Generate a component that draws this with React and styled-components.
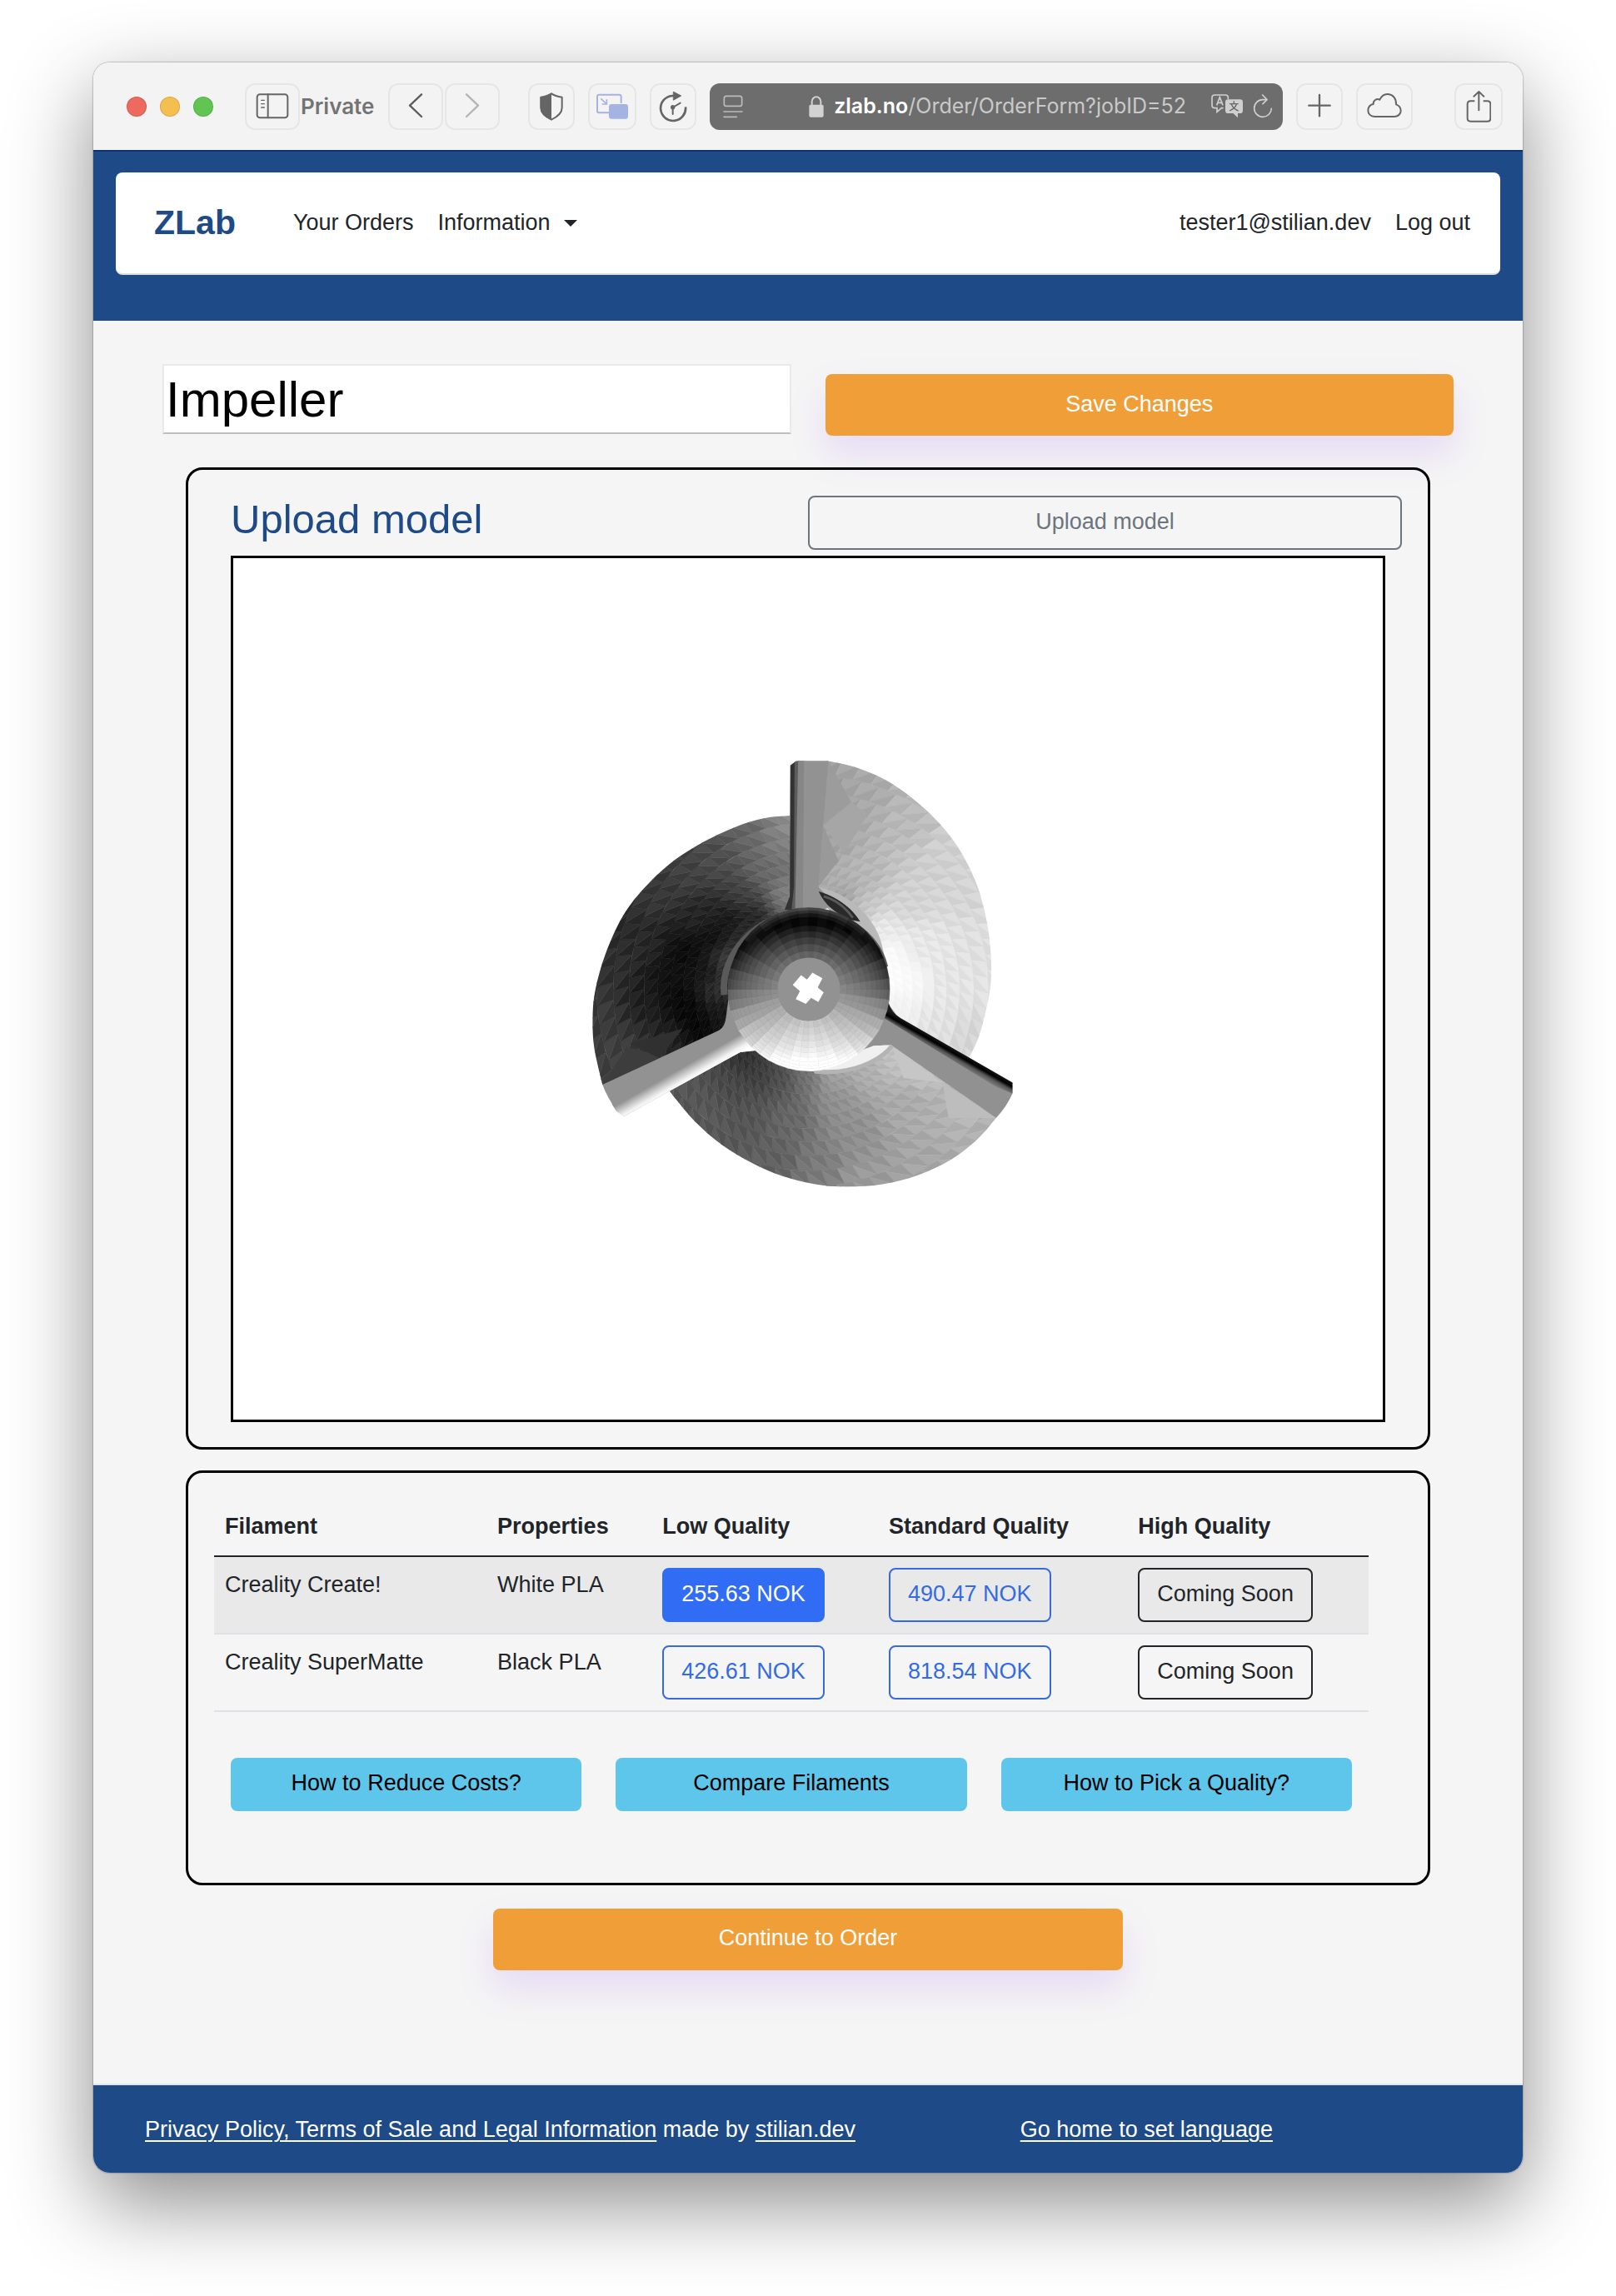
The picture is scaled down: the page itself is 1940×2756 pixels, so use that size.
import React from "react";
import styled, { createGlobalStyle } from "styled-components";

const GlobalStyle = createGlobalStyle`
  *, *::before, *::after { box-sizing: border-box; }
  body {
    margin: 0;
    background: #fff;
    color: #212529;
    font-family: "Liberation Sans", Arial, sans-serif;
    font-size: 27px;
    line-height: 41px;
  }
  button, input { font: inherit; }
  a { color: inherit; }
`;

const Desktop = styled.div`
  padding: 75px 112px 148px;
`;

const Window = styled.div`
  display: flex;
  flex-direction: column;
  overflow: hidden;
  border-radius: 20px;
  background: #f5f5f5;
`;

const WindowShadow = styled.div`
  border-radius: 20px;
  box-shadow: 0 0 2px rgba(0, 0, 0, 0.6), 0 36px 100px rgba(0, 0, 0, 0.46);
`;

/* Browser toolbar */

const Toolbar = styled.div`
  display: flex;
  align-items: center;
  height: 105px;
  padding: 0 24px 0 40px;
  background: #f3f3f3;
  font-family: Inter, sans-serif;
  font-size: 26px;
`;

const Lights = styled.div`
  display: flex;
  gap: 16px;
  margin-right: 38px;
`;

const Light = styled.span`
  width: 24px;
  height: 24px;
  border-radius: 50%;
  border: 1px solid rgba(0, 0, 0, 0.12);
  background: ${(p) => p.$color};
`;

const Group = styled.div`
  display: flex;
  align-items: center;
  gap: ${(p) => p.$gap}px;
  margin-right: ${(p) => p.$after}px;
`;

const ToolButton = styled.button`
  display: flex;
  align-items: center;
  justify-content: center;
  width: ${(p) => p.$width}px;
  height: 56px;
  padding: 0;
  border: 2px solid #e6e6e6;
  border-radius: 12px;
  background: transparent;
  color: #656565;
`;

const PrivateLabel = styled.span`
  width: 106px;
  padding-left: 1px;
  color: #737373;
  font-weight: 600;
`;

const AddressBar = styled.div`
  display: flex;
  flex: 1;
  align-items: center;
  justify-content: space-between;
  height: 56px;
  margin-right: 16px;
  padding: 0 12px 0 16px;
  border-radius: 12px;
  background: #6d6d6d;
`;

const Address = styled.button`
  display: flex;
  align-items: center;
  gap: 12px;
  flex: 1;
  justify-content: flex-end;
  margin-right: 30px;
  padding: 0;
  border: 0;
  background: transparent;
  color: #c9c9c9;
  font-size: 25px;
  white-space: nowrap;
`;

const Host = styled.span`
  color: #fff;
  font-weight: 600;
`;

const BarButton = styled.button`
  display: flex;
  padding: 0;
  border: 0;
  background: transparent;
`;

/* Site header */

const SiteHeader = styled.header`
  padding: 27px 27px 55px;
  background: #1e4a87;
  box-shadow: inset 0 2px 0 #12336a;
`;

const Navbar = styled.nav`
  display: flex;
  align-items: center;
  gap: 29px;
  height: 123px;
  padding: 0 36px 0 46px;
  border-bottom: 2px solid #dcdee1;
  border-radius: 8px;
  background: #fff;
`;

const Brand = styled.a`
  margin-right: 40px;
  color: #1e4a87;
  font-size: 41px;
  font-weight: 700;
  text-decoration: none;
`;

const NavLink = styled.a`
  display: flex;
  align-items: center;
  gap: 16px;
  margin-left: ${(p) => (p.$push ? "auto" : "0")};
  text-decoration: none;
`;

const Caret = styled.span`
  border: 8px solid transparent;
  border-top-color: #212529;
  border-bottom: 0;
`;

/* Page body */

const Main = styled.main`
  display: flex;
  flex-direction: column;
  padding: 52px 0 136px;
`;

const TitleRow = styled.div`
  display: grid;
  grid-template-columns: 1fr 1fr;
  gap: 41px;
  align-items: end;
  margin: 0 83px 38px;
`;

const TitleInput = styled.input`
  width: 100%;
  height: 84px;
  margin-bottom: 2px;
  padding: 0 2px;
  border: 2px solid #e9e9e9;
  border-bottom-color: #bfbfbf;
  border-radius: 0;
  background: #fff;
  color: #000;
  font-size: 60px;
`;

const ActionButton = styled.button`
  width: ${(p) => p.$width || "100%"};
  align-self: ${(p) => (p.$center ? "center" : "end")};
  height: 74px;
  padding: 0 0 2px;
  border: 0;
  border-radius: 8px;
  background: #f09e38;
  box-shadow: 0 22px 44px rgba(145, 65, 250, 0.15);
  color: #fff;
`;

const Card = styled.section`
  margin: 0 111px ${(p) => p.$after}px;
  padding: ${(p) => p.$padding};
  border: 3px solid #000;
  border-radius: 20px;
`;

const ModelHeader = styled.div`
  display: grid;
  grid-template-columns: 1fr 1fr;
  align-items: center;
  margin: 0 -20px 7px;
`;

const ModelTitle = styled.h2`
  margin: 0;
  padding: 0 0 8px 20px;
  color: #1e4a87;
  font-size: 49px;
  font-weight: 400;
  line-height: 57px;
`;

const tones = {
  secondary: "#6c757d",
  primary: "#346be2",
  dark: "#212529",
};

const OutlineButton = styled.button`
  height: 65px;
  padding: 0 21px 2px;
  border: 2px solid ${(p) => (p.$active ? "#316cf4" : tones[p.$tone])};
  border-radius: 8px;
  background: ${(p) => (p.$active ? "#316cf4" : "transparent")};
  color: ${(p) => (p.$active ? "#fff" : tones[p.$tone])};
  white-space: nowrap;
`;

const Viewer = styled.div`
  aspect-ratio: 4 / 3;
  border: 3px solid #000;
  background: #fff;

  svg { display: block; width: 100%; height: 100%; }
`;

const Table = styled.table`
  width: 100%;
  border-collapse: separate;
  border-spacing: 0;
  table-layout: fixed;
`;

const Th = styled.th`
  width: ${(p) => p.$width};
  padding: 14px 13px;
  border-bottom: 2px solid #212529;
  text-align: left;
  white-space: nowrap;
`;

const Row = styled.tr`
  background: ${(p) => (p.$striped ? "#e9e9e9" : "transparent")};
`;

const Td = styled.td`
  padding: 13px;
  border-bottom: 2px solid #dee2e6;
  vertical-align: top;
  white-space: nowrap;

  button { display: block; }
`;

const HelpRow = styled.div`
  display: grid;
  grid-template-columns: repeat(3, 1fr);
  gap: 41px;
  margin: 55px 20px 0;
`;

const HelpButton = styled.button`
  height: 64px;
  padding: 0 0 2px;
  border: 0;
  border-radius: 8px;
  background: #5ec6ea;
  color: #000;
`;

const Footer = styled.footer`
  display: grid;
  grid-template-columns: 66% 34%;
  padding: 33px 62px 31px;
  border-top: 2px solid #dce4ef;
  background: #1e4a87;
  color: #fff;

  a { text-underline-offset: 4px; text-decoration-thickness: 2px; }
`;

/* Icons */

const line = { fill: "none", stroke: "currentColor", strokeLinecap: "round", strokeLinejoin: "round" };

const SidebarIcon = () => (
  <svg width="40" height="32" viewBox="0 0 120 96" {...line} strokeWidth="6">
    <rect x="5" y="4" width="110" height="84" rx="10" />
    <path d="M44 4v84" />
    <path d="M20 25h11M20 38h11M20 51h11" strokeWidth="4" />
  </svg>
);

const ChevronIcon = ({ forward }) => (
  <svg width="18" height="32" viewBox="0 0 54 96" {...line} strokeWidth="7" stroke={forward ? "#b4b4b4" : "#5c5c5c"}>
    <path d={forward ? "M6 4l42 40L6 84" : "M48 4L6 44l42 40"} />
  </svg>
);

const ShieldIcon = () => (
  <svg width="30" height="36" viewBox="0 0 90 108">
    <path d="M45 7C55 14 70 18 83 20V58C83 78 66 91 45 101C24 91 7 78 7 58V20C20 18 35 14 45 7Z" {...line} strokeWidth="6" />
    <path d="M45 5V102C22 93 5 78 5 58V19C20 18 35 14 45 5Z" fill="currentColor" />
  </svg>
);

const PipIcon = () => (
  <svg width="40" height="32" viewBox="0 0 120 96" fill="none" stroke="#a5b3e2" strokeWidth="6">
    <path d="M92 36V12Q92 5 85 5H13Q6 5 6 12V63Q6 70 13 70H48" />
    <rect x="48" y="39" width="69" height="53" rx="9" fill="#a5b3e2" stroke="none" />
    <path d="M19 19L37 36M40 22V39H23" strokeWidth="5" />
  </svg>
);

const TimerIcon = () => (
  <svg width="34" height="38" viewBox="0 0 102 114" {...line} strokeWidth="8">
    <path d="M96 58A45 45 0 1 1 48 18H56" strokeLinecap="butt" />
    <path d="M53 4L80 18L53 33Z" fill="currentColor" strokeWidth="3" />
    <path d="M50 84V60L77 44" strokeWidth="6" />
    <circle cx="50" cy="59" r="8" fill="currentColor" stroke="none" />
  </svg>
);

const ReaderIcon = () => (
  <svg width="24" height="28" viewBox="0 0 72 84" {...line} stroke="#bcbcbc" strokeWidth="5">
    <rect x="4" y="4" width="64" height="36" rx="8" />
    <path d="M3 60h66M3 79h46" />
  </svg>
);

const LockIcon = () => (
  <svg width="18" height="26" viewBox="0 0 54 78">
    <rect x="1" y="32" width="52" height="45" rx="6" fill="#d2d2d2" />
    <path d="M11 34V21a16 17 0 0 1 32 0V34" fill="none" stroke="#d2d2d2" strokeWidth="6" />
  </svg>
);

const TranslateIcon = () => (
  <svg width="38" height="29" viewBox="0 0 114 87" fill="none" stroke="#cfcfcf" strokeWidth="5">
    <path d="M44 50H37L21 64V50H13Q3 50 3 40V13Q3 3 13 3H51Q61 3 61 13V18" />
    <path d="M20 40L31 11L42 40M24 31H39" />
    <path d="M61 19H104Q114 19 114 29V59Q114 69 104 69H96V85L79 69H61Q51 69 51 59V29Q51 19 61 19Z" fill="#cfcfcf" stroke="none" />
    <path d="M82 25V34M66 35H98M91 36C88 48 79 55 66 60M73 36C77 48 86 56 98 60" stroke="#686868" strokeWidth="4" />
  </svg>
);

const ReloadIcon = () => (
  <svg width="24" height="29" viewBox="0 0 72 87" {...line} stroke="#cfcfcf" strokeWidth="5">
    <path d="M67 52A31 31 0 1 1 36 20H49" />
    <path d="M35 3L51 20L36 35" />
  </svg>
);

const PlusIcon = () => (
  <svg width="28" height="32" viewBox="0 0 84 96" {...line} strokeWidth="7">
    <path d="M42 6v76M4 44h76" />
  </svg>
);

const CloudIcon = () => (
  <svg width="42" height="34" viewBox="0 0 126 102" {...line} strokeWidth="6">
    <path d="M28 87C12 87 4 76 4 64C4 52 13 43 23 42C22 29 35 20 46 26C54 10 65 5 76 6C95 8 106 23 105 43C116 47 122 55 122 66C122 79 111 87 98 87Z" />
  </svg>
);

const ShareIcon = () => (
  <svg width="30" height="40" viewBox="0 0 90 120" {...line} strokeWidth="6">
    <path d="M31 40H16Q5 40 5 51V102Q5 113 16 113H77Q88 113 88 102V51Q88 40 77 40H62" strokeLinecap="butt" />
    <path d="M46 73V7M28 23L46 6L64 23" />
  </svg>
);

/* 3D model preview */

const grey = (v) => {
  const n = Math.round(Math.max(0, Math.min(255, v)));
  return `rgb(${n},${n},${n})`;
};

const HUB = { x: 812, y: 832 };

const polar = (r, deg) => [
  HUB.x + r * Math.cos((deg * Math.PI) / 180),
  HUB.y + r * 0.975 * Math.sin((deg * Math.PI) / 180),
];

const shadeAt = (anchors, x, y) => {
  let total = 0;
  let weights = 0;
  anchors.forEach(([ax, ay, v]) => {
    const w = 1 / Math.pow((ax - x) ** 2 + (ay - y) ** 2 + 2500, 1.8);
    total += w * v;
    weights += w;
  });
  return total / weights;
};

const toPoints = (pts) => pts.map((p) => p.map(Math.round).join(",")).join(" ");

/* Smooth rim through the given points, closed by straight inner edges. */
const outline = (rim, inner) => {
  let d = `M${rim[0]}`;
  for (let i = 0; i < rim.length - 1; i += 1) {
    const a = rim[Math.max(0, i - 1)];
    const b = rim[i];
    const c = rim[i + 1];
    const e = rim[Math.min(rim.length - 1, i + 2)];
    d += `C${b[0] + (c[0] - a[0]) / 6} ${b[1] + (c[1] - a[1]) / 6} ${c[0] - (e[0] - b[0]) / 6} ${c[1] - (e[1] - b[1]) / 6} ${c[0]} ${c[1]}`;
  }
  return `${d}L${inner.join("L")}Z`;
};

const facets = (anchors, from, to, twist) => {
  const out = [];
  const radii = [];
  for (let r = 220, step = 20; r < 800; r += step, step += 3) radii.push(r);
  for (let i = 0; i < radii.length - 1; i += 1) {
    for (let a = from; a < to; a += 5) {
      const p = (k, d) => polar(radii[k], a + d + k * twist);
      const tris = [
        [p(i, 0), p(i, 5), p(i + 1, 2.5)],
        [p(i, 5), p(i + 1, 2.5), p(i + 1, 7.5)],
      ];
      tris.forEach((tri, n) => {
        const cx = (tri[0][0] + tri[1][0] + tri[2][0]) / 3;
        const cy = (tri[0][1] + tri[1][1] + tri[2][1]) / 3;
        const base = shadeAt(anchors, cx, cy);
        const contrast = base < 30 || base > 235 ? 2 : 5;
        out.push({ points: toPoints(tri), fill: grey(base + (n ? contrast : -contrast)) });
      });
    }
  }
  return out;
};

const blades = [
  {
    id: "left",
    rim: [
      [748, 268], [660, 277], [560, 307], [450, 358], [345, 424], [255, 507], [185, 597], [128, 718],
      [95, 830], [85, 920], [90, 1020], [118, 1142],
    ],
    inner: [[300, 1080], [530, 980], [600, 900], [700, 700], [760, 600]],
    from: 60, to: 400, twist: -4,
    anchors: [
      [740, 300, 145], [700, 350, 125], [600, 330, 100], [650, 450, 105], [730, 520, 130], [600, 520, 65],
      [500, 400, 75], [400, 450, 65], [300, 520, 55], [550, 620, 15], [450, 600, 38], [400, 720, 5],
      [250, 700, 40], [150, 750, 48], [380, 850, 6], [470, 780, 12], [520, 800, 45], [500, 830, 55],
      [250, 880, 30], [120, 900, 58], [150, 1050, 65], [200, 1020, 60], [300, 1020, 45], [350, 980, 30],
      [430, 950, 2], [520, 900, 20], [540, 740, 75], [600, 660, 55], [480, 660, 6], [330, 780, 16],
      [400, 900, 2], [620, 600, 30],
    ],
  },
  {
    id: "right",
    rim: [
      [875, 90], [965, 110], [1065, 150], [1162, 213], [1250, 292], [1320, 380], [1372, 480], [1405, 585],
      [1422, 690], [1425, 800], [1408, 900], [1382, 990], [1350, 1056],
    ],
    inner: [[1110, 925], [1070, 900], [1000, 700], [830, 520], [850, 300]],
    from: -190, to: 80, twist: 4,
    anchors: [
      [875, 200, 155], [900, 350, 162], [1000, 200, 168], [1150, 300, 185], [1000, 450, 182], [1250, 400, 208],
      [1350, 500, 212], [1150, 550, 210], [1200, 700, 230], [1080, 720, 254], [1150, 800, 250], [1400, 700, 223],
      [1250, 950, 226], [1350, 1000, 212], [1100, 880, 242], [930, 480, 175], [1000, 560, 200], [1060, 640, 235],
      [1300, 800, 228], [930, 540, 150], [1100, 800, 255],
    ],
  },
  {
    id: "bottom",
    rim: [
      [343, 1162], [428, 1260], [520, 1337], [620, 1395], [720, 1437], [830, 1464], [940, 1473], [1060, 1465],
      [1180, 1435], [1290, 1385], [1380, 1318], [1442, 1250],
    ],
    inner: [[1090, 1014], [1000, 1030], [812, 1000], [640, 1028], [580, 1036]],
    from: 0, to: 330, twist: -4,
    anchors: [
      [400, 1190, 85], [600, 1060, 45], [650, 1100, 58], [720, 1130, 75], [560, 1150, 72], [600, 1250, 84],
      [800, 1130, 112], [750, 1250, 102], [700, 1380, 95], [850, 1400, 122], [900, 1180, 142], [1000, 1100, 175],
      [960, 1300, 142], [1000, 1450, 155], [1150, 1200, 168], [1100, 1060, 195], [1200, 1110, 192], [1250, 1250, 175],
      [1350, 1230, 185], [1400, 1280, 175], [1200, 1380, 165], [900, 1120, 165], [480, 1250, 88],
    ],
  },
];

const hubFacets = () => {
  const out = [];
  const rings = [105, 128, 152, 174, 194, 212, 228, 242, 254, 264, 272];
  for (let i = 0; i < rings.length - 1; i += 1) {
    for (let a = 0; a < 360; a += 7.5) {
      const s = Math.sin(((a + 3.75) * Math.PI) / 180);
      const t = i / (rings.length - 2);
      const inner = s < 0 ? 134 + s * 36 : 134 + s * 66;
      const outer = s < 0 ? 84 + s * 150 : 84 + s * 200;
      const collar = s < -0.5 ? Math.max(0, t - 0.7) * 420 * (-s - 0.5) : 0;
      const value = Math.max(8, inner + (outer - inner) * t) + collar;
      out.push({
        points: toPoints([polar(rings[i], a), polar(rings[i], a + 7.5), polar(rings[i + 1], a + 7.5), polar(rings[i + 1], a)]),
        fill: grey(value + ((a / 7.5) % 2 ? 3 : -3)),
      });
    }
  }
  return out;
};

const Facets = ({ items }) =>
  items.map((f, i) => <polygon key={i} points={f.points} fill={f.fill} stroke={f.fill} strokeWidth="1.5" />);

const Impeller = () => (
  <svg viewBox="0 0 1380 1034" role="img" aria-label="Impeller model preview">
    <defs>
      {blades.map((b) => (
        <clipPath id={b.id} key={b.id}><path d={outline(b.rim, b.inner)} /></clipPath>
      ))}
      <linearGradient id="ribEdge" gradientUnits="userSpaceOnUse" x1="370" y1="1095" x2="396" y2="1142">
        <stop offset="0" stopColor="#929292" />
        <stop offset="0.35" stopColor="#c4c4c4" />
        <stop offset="0.7" stopColor="#f2f2f2" />
        <stop offset="1" stopColor="#fff" />
      </linearGradient>
      <linearGradient id="ribDark" gradientUnits="userSpaceOnUse" x1="1300" y1="1022" x2="1278" y2="1062">
        <stop offset="0" stopColor="#1c1c1c" />
        <stop offset="0.35" stopColor="#000" />
        <stop offset="0.6" stopColor="#555" />
        <stop offset="1" stopColor="#8a8a8a" />
      </linearGradient>
    </defs>
    <g transform="translate(401 210) scale(0.3571 0.3699)">
      {blades.map((b) => (
        <g key={b.id} clipPath={`url(#${b.id})`}>
          <Facets items={facets(b.anchors, b.from, b.to, b.twist)} />
        </g>
      ))}
      <path d="M878 90L955 225L860 300Z" fill="#9c9c9c" />
      <path d="M955 225L1010 265L930 390L860 300Z" fill="#a6a6a6" />
      <path d="M860 300L912 415L845 498Z" fill="#999" />
      <path d="M1090 1014L1130 1120L1262 1135Z" fill="#c6c6c6" />
      <path d="M1262 1135L1442 1250L1282 1250Z" fill="#bdbdbd" />
      <path d="M118 1142L200 1020L325 1048Z" fill="#3d3d3d" />
      <path d="M210 1008L388 960L310 1056Z" fill="#303030" />
      <path d="M750 105L770 90H878L860 300L845 500L900 560L812 590L730 578L748 530Z" fill="#929292" />
      <path d="M750 105L768 92L766 470L764 575H730L748 530Z" fill="#333" />
      <path d="M764 94L780 90L778 480L770 573H754L762 500Z" fill="#5c5c5c" />
      <path d="M776 90H796L792 570H766Z" fill="#868686" />
      <path d="M845 500C920 515 985 560 1020 610C1050 650 1062 690 1070 750L1020 690L960 615Z" fill="#b9b9b9" />
      <path d="M845 514C900 530 950 560 985 612L960 608C910 590 870 565 845 514Z" fill="#2a2a2a" />
      <path d="M862 530C900 540 935 565 960 600" fill="none" stroke="#5a5a5a" strokeWidth="8" />
      <path d="M118 1142L510 965Q530 955 534 920L542 860L660 1000L590 1030L190 1245L165 1225Q135 1185 118 1142Z" fill="#929292" />
      <path d="M150 1205L590 975L645 1030L582 1036L345 1162L190 1245L165 1228Z" fill="url(#ribEdge)" />
      <path d="M1080 880L1110 920L1497 1135V1170Q1478 1212 1442 1250L1090 1014L1030 1015L980 1035L1060 930Z" fill="#919191" />
      <path d="M1080 875Q1090 908 1120 925L1497 1135V1170L1440 1148L1066 926Z" fill="url(#ribDark)" />
      <path d="M980 1035C1020 1015 1060 1012 1092 1014C1060 1055 960 1112 812 1098Z" fill="#f0f0f0" />
      <path d="M1092 1016C1050 1066 950 1112 830 1098" fill="none" stroke="#b4b4b4" strokeWidth="14" />
      <path d="M528 850C510 720 640 584 805 582C920 578 1040 650 1068 760" fill="none" stroke="#5a5a5a" strokeWidth="22" />
      <ellipse cx={HUB.x} cy={HUB.y} rx="271" ry="264" fill="#3a3a3a" />
      <Facets items={hubFacets()} />
      <ellipse cx={HUB.x} cy={HUB.y} rx="106" ry="103" fill="#929292" />
      <path
        d="M786 786L806 800L824 778L858 796L842 826L862 842L844 873L820 860L802 879L768 864L782 838L758 818Z"
        fill="#fff"
      />
    </g>
  </svg>
);

/* Data */

const columns = [
  ["Filament", "23.6%"],
  ["Properties", "14.3%"],
  ["Low Quality", "19.6%"],
  ["Standard Quality", "21.6%"],
  ["High Quality", "20.9%"],
];

const filaments = [
  { name: "Creality Create!", properties: "White PLA", low: "255.63 NOK", standard: "490.47 NOK", selected: true },
  { name: "Creality SuperMatte", properties: "Black PLA", low: "426.61 NOK", standard: "818.54 NOK" },
];

const help = ["How to Reduce Costs?", "Compare Filaments", "How to Pick a Quality?"];

const BrowserToolbar = () => (
  <Toolbar>
    <Lights>
      <Light $color="#ed6a5e" />
      <Light $color="#f5bf4f" />
      <Light $color="#61c554" />
    </Lights>
    <ToolButton $width={66} aria-label="Sidebar"><SidebarIcon /></ToolButton>
    <PrivateLabel>Private</PrivateLabel>
    <Group $gap={2} $after={34}>
      <ToolButton $width={66} aria-label="Back"><ChevronIcon /></ToolButton>
      <ToolButton $width={66} aria-label="Forward"><ChevronIcon forward /></ToolButton>
    </Group>
    <Group $gap={16} $after={16}>
      <ToolButton $width={56} aria-label="Privacy report"><ShieldIcon /></ToolButton>
      <ToolButton $width={58} aria-label="Picture in picture"><PipIcon /></ToolButton>
      <ToolButton $width={56} aria-label="Refresh timer"><TimerIcon /></ToolButton>
    </Group>
    <AddressBar>
      <BarButton aria-label="Reader"><ReaderIcon /></BarButton>
      <Address>
        <LockIcon />
        <span><Host>zlab.no</Host>/Order/OrderForm?jobID=52</span>
      </Address>
      <Group $gap={12} $after={0}>
        <BarButton aria-label="Translate"><TranslateIcon /></BarButton>
        <BarButton aria-label="Reload"><ReloadIcon /></BarButton>
      </Group>
    </AddressBar>
    <Group $gap={16} $after={50}>
      <ToolButton $width={56} aria-label="New tab"><PlusIcon /></ToolButton>
      <ToolButton $width={68} aria-label="iCloud tabs"><CloudIcon /></ToolButton>
    </Group>
    <ToolButton $width={58} aria-label="Share"><ShareIcon /></ToolButton>
  </Toolbar>
);

export default function App() {
  return (
    <Desktop>
      <GlobalStyle />
      <WindowShadow>
        <Window>
          <BrowserToolbar />
          <SiteHeader>
            <Navbar>
              <Brand href="#">ZLab</Brand>
              <NavLink href="#">Your Orders</NavLink>
              <NavLink href="#">Information<Caret /></NavLink>
              <NavLink href="#" $push>tester1@stilian.dev</NavLink>
              <NavLink href="#">Log out</NavLink>
            </Navbar>
          </SiteHeader>
          <Main>
            <TitleRow>
              <TitleInput aria-label="Order name" defaultValue="Impeller" />
              <ActionButton>Save Changes</ActionButton>
            </TitleRow>
            <Card $padding="31px 51px 30px" $after={25}>
              <ModelHeader>
                <ModelTitle>Upload model</ModelTitle>
                <OutlineButton $tone="secondary">Upload model</OutlineButton>
              </ModelHeader>
              <Viewer><Impeller /></Viewer>
            </Card>
            <Card $padding="30px 71px 86px 31px" $after={28}>
              <Table>
                <thead>
                  <tr>
                    {columns.map(([label, width]) => (
                      <Th key={label} $width={width} scope="col">{label}</Th>
                    ))}
                  </tr>
                </thead>
                <tbody>
                  {filaments.map((f) => (
                    <Row key={f.name} $striped={f.selected}>
                      <Td>{f.name}</Td>
                      <Td>{f.properties}</Td>
                      <Td><OutlineButton $tone="primary" $active={f.selected}>{f.low}</OutlineButton></Td>
                      <Td><OutlineButton $tone="primary">{f.standard}</OutlineButton></Td>
                      <Td><OutlineButton $tone="dark">Coming Soon</OutlineButton></Td>
                    </Row>
                  ))}
                </tbody>
              </Table>
              <HelpRow>
                {help.map((label) => <HelpButton key={label}>{label}</HelpButton>)}
              </HelpRow>
            </Card>
            <ActionButton $width="44%" $center>Continue to Order</ActionButton>
          </Main>
          <Footer>
            <span>
              <a href="#">Privacy Policy, Terms of Sale and Legal Information</a> made by <a href="#">stilian.dev</a>
            </span>
            <span><a href="#">Go home to set language</a></span>
          </Footer>
        </Window>
      </WindowShadow>
    </Desktop>
  );
}
